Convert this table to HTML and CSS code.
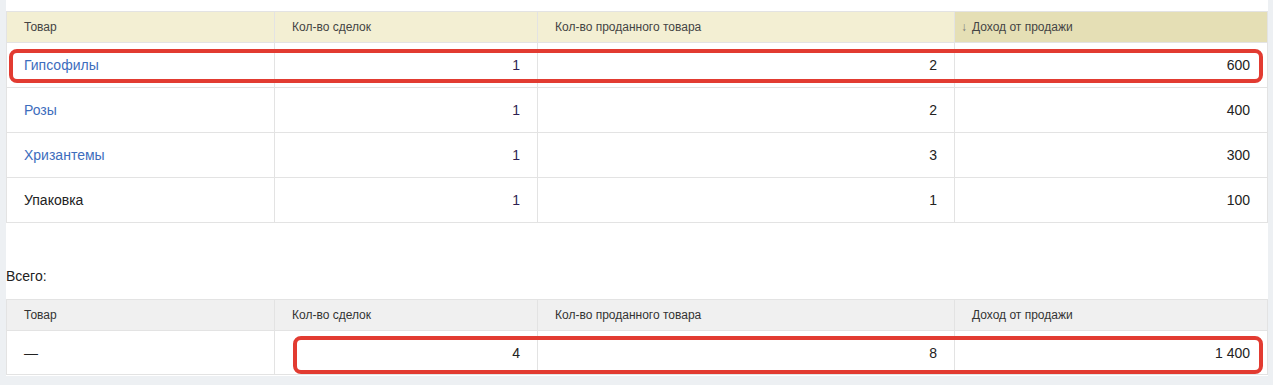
FILE: index.html
```html
<!DOCTYPE html>
<html lang="ru">
<head>
<meta charset="utf-8">
<link rel="stylesheet" href="styles.css">
</head>
<body>
<div class="panel">
  <div class="wrap">
    <table class="grid">
      <colgroup><col class="c1"><col class="c2"><col class="c3"><col class="c4"></colgroup>
      <thead>
        <tr class="head-y">
          <th>Товар</th><th>Кол-во сделок</th><th>Кол-во проданного товара</th><th class="sorted"><span class="arrow">↓</span>Доход от продажи</th>
        </tr>
      </thead>
      <tbody>
        <tr><td><a class="link">Гипсофилы</a></td><td class="num deals">1</td><td class="num">2</td><td class="num">600</td></tr>
        <tr><td><a class="link">Розы</a></td><td class="num deals">1</td><td class="num">2</td><td class="num">400</td></tr>
        <tr><td><a class="link">Хризантемы</a></td><td class="num deals">1</td><td class="num">3</td><td class="num">300</td></tr>
        <tr><td>Упаковка</td><td class="num deals">1</td><td class="num">1</td><td class="num">100</td></tr>
      </tbody>
    </table>
    <div class="mark mark1"></div>
  </div>

  <div class="total-label">Всего:</div>

  <div class="wrap">
    <table class="grid">
      <colgroup><col class="c1"><col class="c2"><col class="c3"><col class="c4"></colgroup>
      <thead>
        <tr class="head-g">
          <th>Товар</th><th>Кол-во сделок</th><th>Кол-во проданного товара</th><th>Доход от продажи</th>
        </tr>
      </thead>
      <tbody>
        <tr class="total-row"><td>—</td><td class="num">4</td><td class="num">8</td><td class="num">1 400</td></tr>
      </tbody>
    </table>
    <div class="mark mark2"></div>
  </div>
</div>
</body>
</html>
```
FILE: styles.css
```css
html, body { margin: 0; padding: 0; }
body {
  background: #edf0f3;
  font-family: "Liberation Sans", Arial, sans-serif;
  color: #222;
  height: 385px;
  overflow: hidden;
}
.panel {
  margin-left: 6px;
  width: 1262px;
  background: #fff;
  padding-top: 11px;
  height: 365px;
}
.wrap { position: relative; width: 1261px; }
.grid {
  width: 1261px;
  border-collapse: collapse;
  table-layout: fixed;
}
.c1 { width: 268px; }
.c2 { width: 263px; }
.c3 { width: 417px; }
.c4 { width: 313px; }
.grid th, .grid td {
  border: 1px solid #e3e3e3;
  padding: 0 17px;
}
.grid th {
  height: 30px;
  font-weight: normal;
  font-size: 12px;
  text-align: left;
  color: #444;
}
.head-y th { background: #f3efd3; }
.head-y th.sorted { background: #e5dfb5; padding-left: 6px; }
.arrow { color: #777; display: inline-block; width: 11px; }
.head-g th { background: #f0f0f0; color: #333; }
.grid td {
  height: 44px;
  font-size: 14px;
}
.total-row td { height: 43px; }
.num { text-align: right; }
.deals { color: #2e1f52; }
.link { color: #3d6dbd; text-decoration: none; }
.total-label {
  font-size: 14px;
  line-height: 16px;
  box-sizing: border-box;
  padding-top: 45px;
  height: 76px;
}
.mark {
  position: absolute;
  border: 4px solid #e23b31;
  border-radius: 8px;
  box-sizing: border-box;
}
.mark1 { left: 3px; top: 38px; width: 1254px; height: 34px; }
.mark2 { left: 287px; top: 37px; width: 970px; height: 38px; }
```
